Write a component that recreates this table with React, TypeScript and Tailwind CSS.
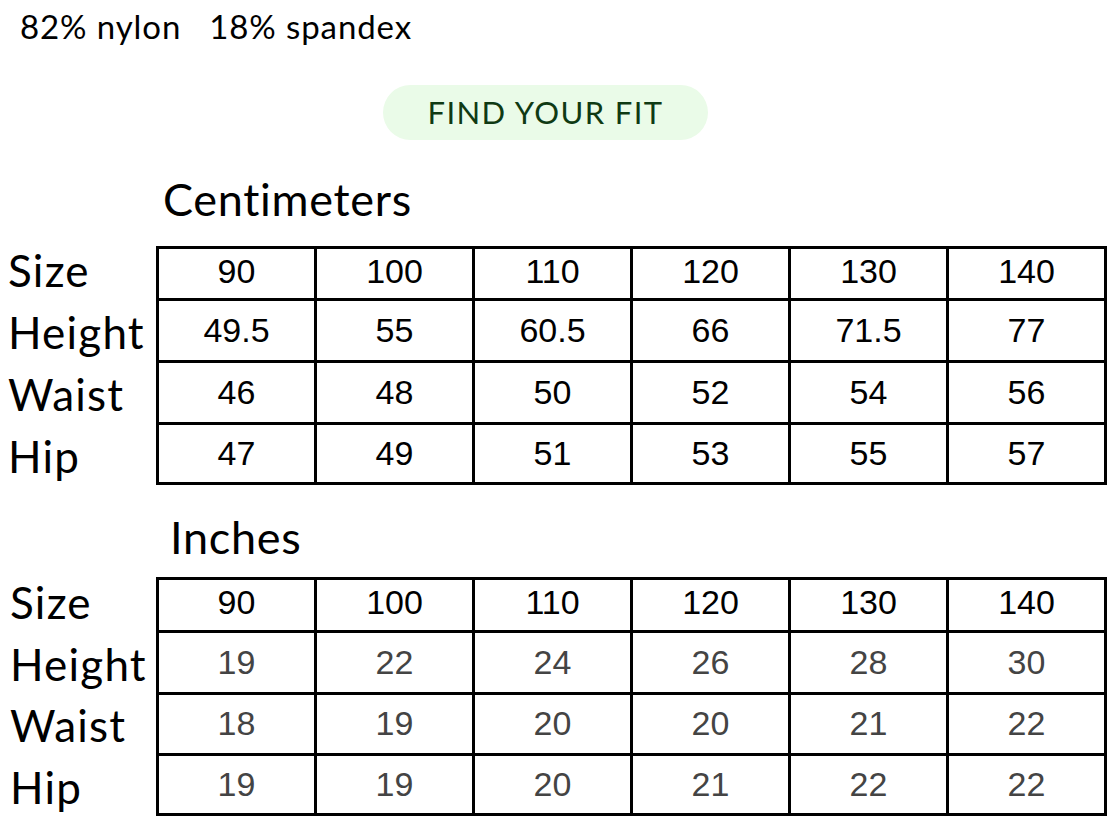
import React from "react";

const sizes = ["90", "100", "110", "120", "130", "140"];

type Row = { label: string; values: string[] };

const cmRows: Row[] = [
  { label: "Height", values: ["49.5", "55", "60.5", "66", "71.5", "77"] },
  { label: "Waist", values: ["46", "48", "50", "52", "54", "56"] },
  { label: "Hip", values: ["47", "49", "51", "53", "55", "57"] },
];

const inchRows: Row[] = [
  { label: "Height", values: ["19", "22", "24", "26", "28", "30"] },
  { label: "Waist", values: ["18", "19", "20", "20", "21", "22"] },
  { label: "Hip", values: ["19", "19", "20", "21", "22", "22"] },
];

function SizeTable({
  title,
  rows,
  heights,
  titleClass,
  labelPad,
  valueColor,
}: {
  title: string;
  rows: Row[];
  heights: string[];
  titleClass: string;
  labelPad: string;
  valueColor: string;
}) {
  const all: Row[] = [{ label: "Size", values: sizes }, ...rows];

  return (
    <section>
      <h2 className={`font-['Lato',sans-serif] text-[45px] font-normal leading-none tracking-[0.7px] ${titleClass}`}>
        {title}
      </h2>
      <div className="grid grid-cols-[156px_repeat(5,158px)_161px]">
        {all.map((row, r) => {
          const last = r === all.length - 1;
          return (
            <React.Fragment key={row.label}>
              <div
                className={`flex items-end whitespace-nowrap font-['Lato',sans-serif] text-[44px] leading-none tracking-[1.2px] text-black ${heights[r]} ${labelPad} ${last ? "pb-[7px]" : "pb-[6px]"}`}
              >
                {row.label}
              </div>
              {row.values.map((v, c) => (
                <div
                  key={c}
                  className={`flex items-center justify-center border-l-[3px] border-t-[3px] border-black font-['Liberation_Sans',Arial,sans-serif] text-[34px] leading-none ${heights[r]} ${c === 5 ? "border-r-[3px]" : ""} ${last ? "border-b-[3px]" : ""} ${r === 0 ? "pb-[6px] text-black" : `pb-[2px] ${valueColor}`}`}
                >
                  {v}
                </div>
              ))}
            </React.Fragment>
          );
        })}
      </div>
    </section>
  );
}

export default function App() {
  return (
    <div className="h-[816px] w-[1117px] overflow-hidden bg-white text-black">
      <p className="pl-[20px] pt-[10px] font-['Lato',sans-serif] text-[33px] leading-none tracking-[0.9px]">
        82% nylon<span className="ml-[28px]">18% spandex</span>
      </p>

      <div className="ml-[383px] mt-[42px] flex h-[55px] w-[325px] items-center justify-center rounded-full bg-[#eafbe8]">
        <span className="font-['Lato',sans-serif] text-[31px] leading-none tracking-[1.4px] text-[#0f3a13]">
          FIND YOUR FIT
        </span>
      </div>

      <SizeTable
        title="Centimeters"
        rows={cmRows}
        heights={["h-[52px]", "h-[62px]", "h-[62px]", "h-[63px]"]}
        titleClass="mb-[24px] mt-[37px] pl-[163px]"
        labelPad="pl-[8px]"
        valueColor="text-black"
      />

      <SizeTable
        title="Inches"
        rows={inchRows}
        heights={["h-[53px]", "h-[62px]", "h-[61px]", "h-[63px]"]}
        titleClass="mb-[17px] mt-[30px] pl-[170px]"
        labelPad="pl-[10px]"
        valueColor="text-[#444444]"
      />
    </div>
  );
}
